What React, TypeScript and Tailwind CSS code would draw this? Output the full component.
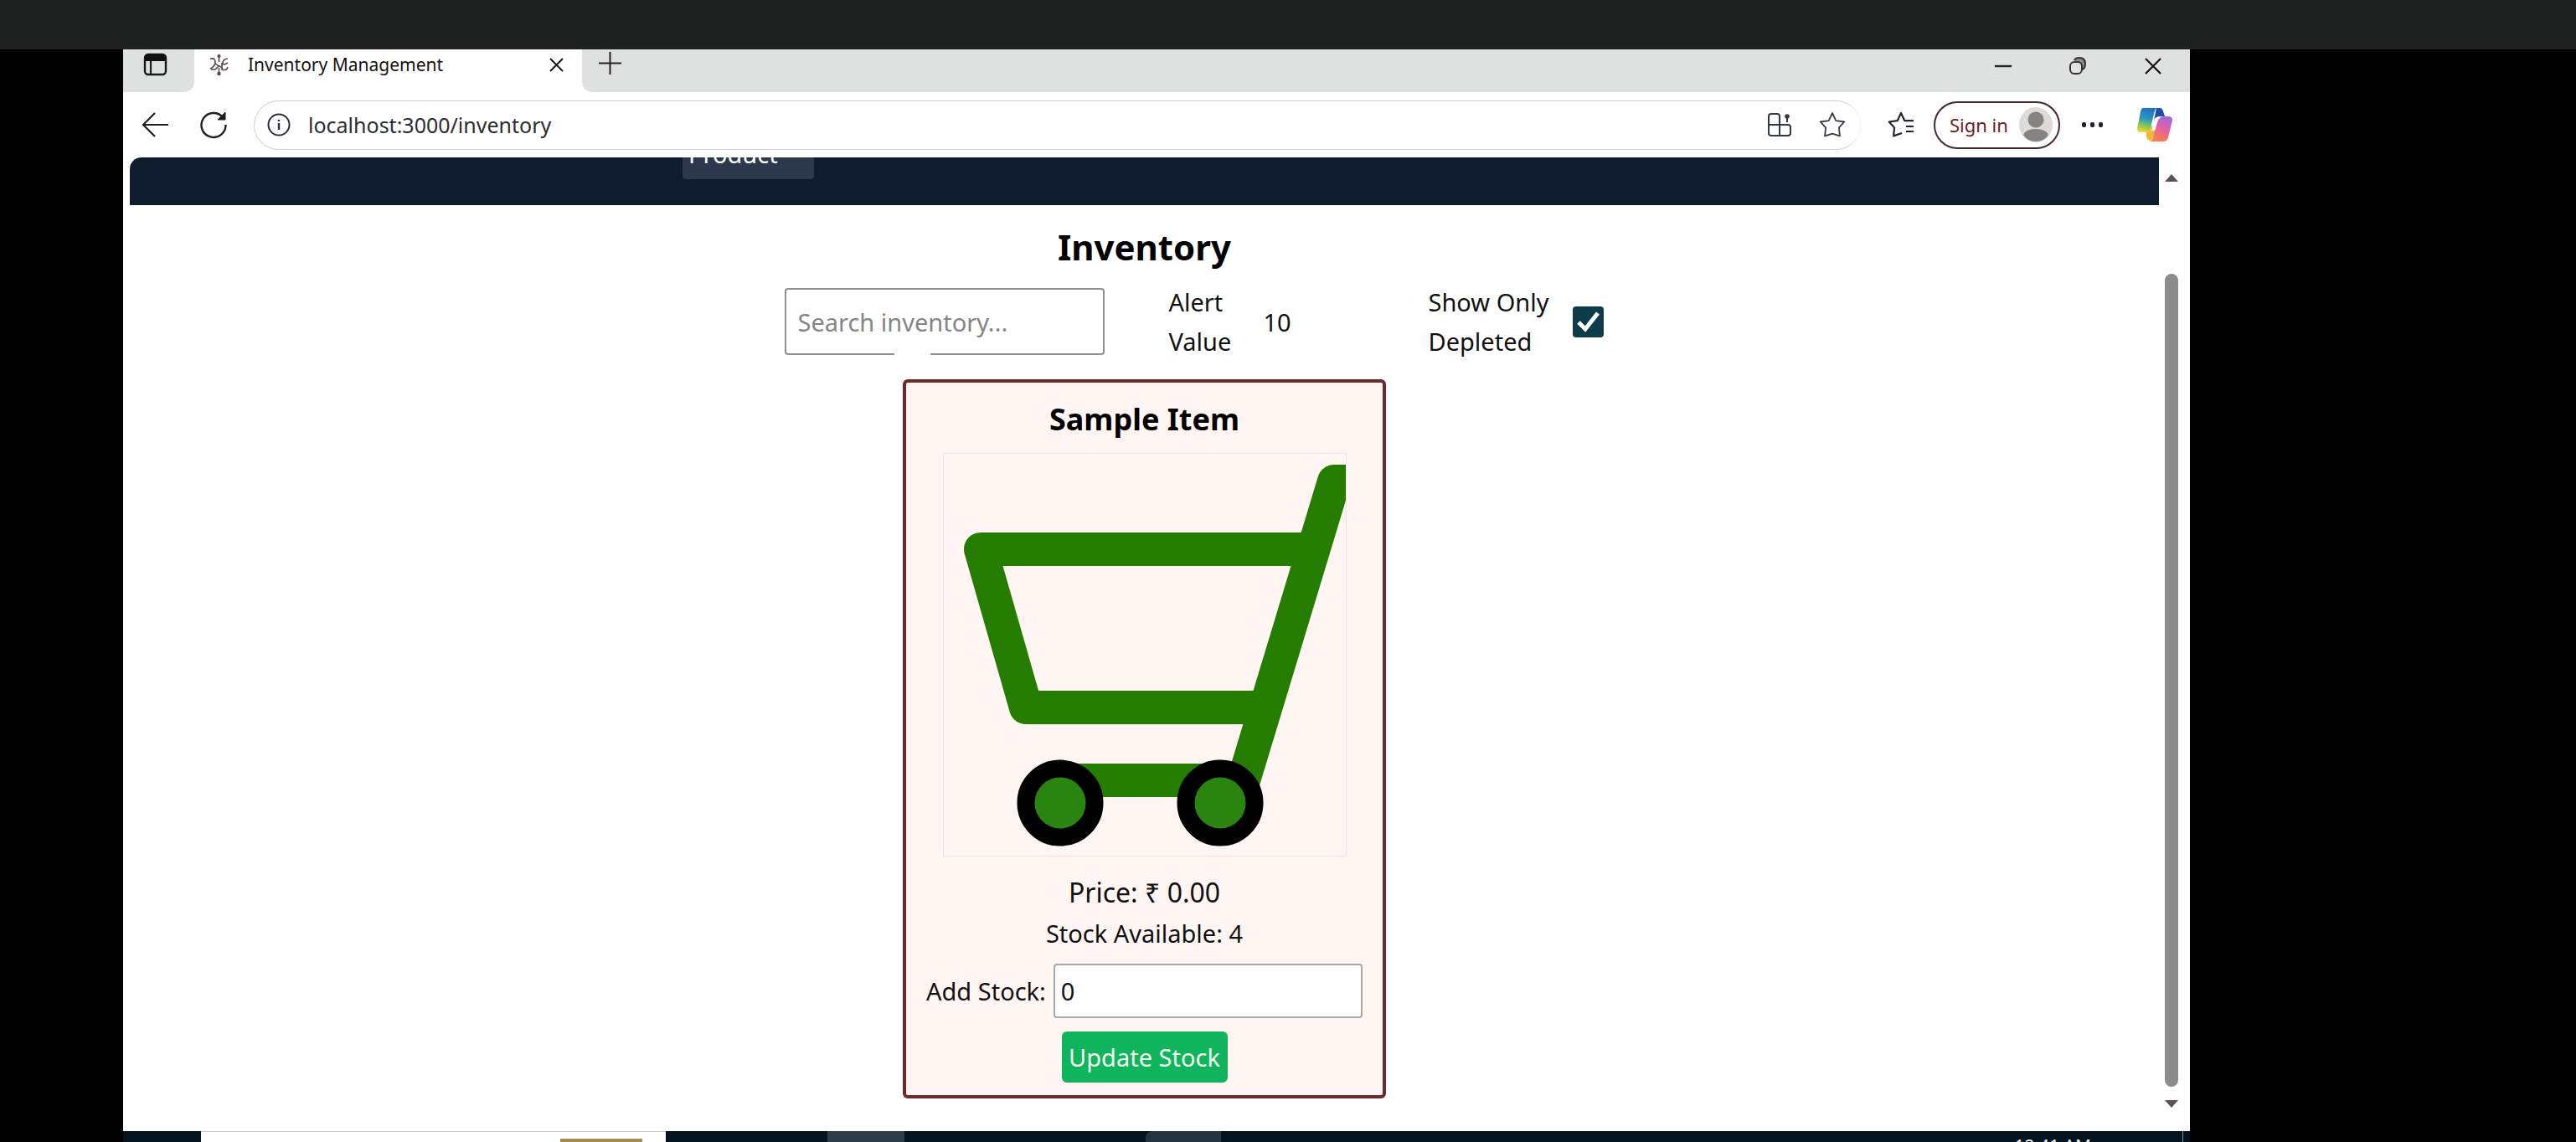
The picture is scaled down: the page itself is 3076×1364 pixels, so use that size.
import React from "react";

function TabStrip() {
  return (
    <div className="flex h-[51px] bg-[#dfe0e0]">
      <div className="flex w-[85px] items-start rounded-br-[14px] pl-6 pt-1">
        <button aria-label="Tab actions">
          <svg width="30" height="28" viewBox="0 0 30 28" fill="none">
            <rect x="2" y="2" width="25" height="24" rx="4" stroke="#1c1c1c" strokeWidth="2.4" />
            <path d="M2 5q0-3 4-3h17q4 0 4 3v5H2z" fill="#111" />
            <path d="M9 10v16" stroke="#1c1c1c" strokeWidth="2.2" />
          </svg>
        </button>
      </div>
      <div className="relative flex w-[463px] items-start bg-white pl-4">
        <svg className="absolute -left-[14px] bottom-0" width="14" height="14" viewBox="0 0 14 14">
          <path d="M14 0v14H0Q14 14 14 0z" fill="#fff" />
        </svg>
        <svg className="absolute -right-[14px] bottom-0" width="14" height="14" viewBox="0 0 14 14">
          <path d="M0 0v14h14Q0 14 0 0z" fill="#fff" />
        </svg>
        <svg className="mt-[5px]" width="28" height="28" viewBox="0 0 28 28" fill="none" stroke="#54474a" strokeWidth="1.6">
          <path d="M13.500 3v7M13.500 17v6M3 6q6-1 6 4t-6 8M8 11l5 4-4 4H4M24 6q-6 1-6 5t6 0M17 11v8q6 2 7-3M13 14l5 4" />
          <circle cx="13.500" cy="3" r="1.200" fill="#54474a" />
          <circle cx="13.500" cy="24" r="1.400" fill="#54474a" />
        </svg>
        <span className="ml-5 flex-1 text-[21px] leading-9 text-[#111]">Inventory Management</span>
        <button aria-label="Close tab" className="mr-5 mt-[9px]">
          <svg width="20" height="20" viewBox="0 0 20 20" stroke="#1a1a1a" strokeWidth="2">
            <path d="M2 2l15 15M17 2L2 17" />
          </svg>
        </button>
      </div>
      <button aria-label="New tab" className="ml-[19px] self-start pt-[2px]">
        <svg width="30" height="30" viewBox="0 0 30 30" stroke="#2a2222" strokeWidth="2">
          <path d="M1 14.500h27M14.500 1v27" />
        </svg>
      </button>
      <div className="flex flex-1 items-start justify-end gap-[66px] pr-8 pt-2">
        <button aria-label="Minimize">
          <svg width="22" height="24" viewBox="0 0 22 24" stroke="#222" strokeWidth="2.4">
            <path d="M1 12h20" />
          </svg>
        </button>
        <button aria-label="Restore">
          <svg width="24" height="24" viewBox="0 0 24 24" fill="none" stroke="#333" strokeWidth="2">
            <path d="M8 5q1-3 6-3 7 0 7 7 0 5-3 7" fill="#8a8a8a" />
            <rect x="3" y="7" width="14" height="14" rx="5" fill="#e4e4e4" />
          </svg>
        </button>
        <button aria-label="Close">
          <svg width="24" height="24" viewBox="0 0 24 24" stroke="#111" strokeWidth="2.2">
            <path d="M3 3l18 18M21 3L3 21" />
          </svg>
        </button>
      </div>
    </div>
  );
}

function Toolbar() {
  return (
    <div className="flex h-[78px] items-center bg-white pr-5">
      <button aria-label="Back" className="ml-5">
        <svg width="36" height="32" viewBox="0 0 36 32" fill="none" stroke="#1f1f1f" strokeWidth="2.2">
          <path d="M34 16H4M18 2L4 16l14 14" />
        </svg>
      </button>
      <button aria-label="Refresh" className="ml-[34px]">
        <svg width="36" height="36" viewBox="0 0 36 36" fill="none" stroke="#1f1f1f" strokeWidth="2.4">
          <path d="M29 9A14.500 14.500 0 1 0 32.500 18" />
          <path d="M32 3v9h-9z" fill="#1f1f1f" strokeWidth="1" />
        </svg>
      </button>
      <div className="ml-[30px] flex h-[59px] flex-1 items-center rounded-full border-t border-b border-l border-[#cfcfcf] pl-[14px]">
        <svg width="30" height="30" viewBox="0 0 30 30" fill="none" stroke="#2b2f3a" strokeWidth="2">
          <circle cx="15" cy="15" r="12.500" />
          <path d="M15 9v2M15 13v8" strokeWidth="2.4" />
        </svg>
        <input
          aria-label="Address"
          className="ml-5 min-w-0 flex-1 text-[25px] leading-9 text-[#2d2d33] outline-none"
          defaultValue="localhost:3000/inventory"
        />
        <button aria-label="Install app">
          <svg width="30" height="30" viewBox="0 0 30 30" fill="none" stroke="#333843" strokeWidth="2">
            <path d="M15 28H5q-3 0-3-3V5q0-3 3-3h7q3 0 3 3v23zM2 15h23q3 0 3 3v7q0 3-3 3H15M24 3v9" />
            <circle cx="24" cy="5" r="2.800" fill="#333843" stroke="none" />
          </svg>
        </button>
        <button aria-label="Add to favorites" className="ml-8 mr-[18px]">
          <svg width="32" height="32" viewBox="0 0 32 32" fill="none" stroke="#3a3a44" strokeWidth="1.800" strokeLinejoin="round">
            <path d="M16 2l4.300 9.200 10 1.300-6.400 6.900 1 10L16 26.600l-8.900 2.800 1-10-6.400-6.900 10-1.300z" />
          </svg>
        </button>
      </div>
      <button aria-label="Favorites" className="ml-8">
        <svg width="34" height="32" viewBox="0 0 34 32" fill="none" stroke="#22242e" strokeWidth="2.200" strokeLinejoin="round">
          <path d="M17 26l-9.900 3.400 1-10-6.400-6.900 10-1.300L16 2l4.300 9.200H31M22 18h9M22 24h9" />
        </svg>
      </button>
      <button className="ml-[21px] flex h-[57px] w-[151px] items-center justify-between rounded-full border-2 border-[#46292b] pl-[17px] pr-[7px]">
        <span className="text-[22px] leading-8 text-[#6a1d22]">Sign in</span>
        <svg width="40" height="42" viewBox="0 0 40 42">
          <ellipse cx="20" cy="21" rx="20" ry="21" fill="#dddad7" />
          <circle cx="20" cy="15" r="9.500" fill="#858382" />
          <path d="M5 33q3-7 15-7t15 7q-5 8-15 8T5 33z" fill="#858382" />
        </svg>
      </button>
      <button aria-label="Settings and more" className="ml-[25px]">
        <svg width="28" height="10" viewBox="0 0 28 10" fill="#202028">
          <rect x="1" y="2" width="5" height="6" rx="2" />
          <rect x="11" y="2" width="5" height="6" rx="2" />
          <rect x="21" y="2" width="5" height="6" rx="2" />
        </svg>
      </button>
      <button aria-label="Copilot" className="ml-[38px]">
        <svg width="44" height="42" viewBox="0 0 44 42">
          <defs>
            <linearGradient id="cool" x1="0.600" y1="0" x2="0.400" y2="1">
              <stop offset="0" stopColor="#1f6fc4" />
              <stop offset="0.450" stopColor="#2a9ac0" />
              <stop offset="0.720" stopColor="#7fc35a" />
              <stop offset="1" stopColor="#f2d432" />
            </linearGradient>
            <linearGradient id="warm" x1="0.700" y1="0" x2="0.300" y2="1">
              <stop offset="0" stopColor="#a566e6" />
              <stop offset="0.500" stopColor="#e8619c" />
              <stop offset="1" stopColor="#f9853f" />
            </linearGradient>
          </defs>
          <path d="M24 1h4q3 0 4 4l2 6h-6q-5 0-7 5z" fill="#1a4fae" />
          <path d="M8 1h16q-2 2-3 7l-4 17q-1 5-5 5H5q-4 0-4-4 0-2 1-5L5 5q1-4 3-4z" fill="url(#cool)" />
          <path d="M12 30q4 0 5-5l1-3 6 2-4 12q-1 3-4 4-3-1-4-5z" fill="#f3b62e" />
          <path d="M32 11h6q5 0 5 4 0 2-1 5l-4 16q-1 5-6 5H16q3-1 4-5l5-18q1-6 7-7z" fill="url(#warm)" />
          <path d="M22 13h6q-2 1-3 5l-3 10h-4z" fill="#fff" />
        </svg>
      </button>
    </div>
  );
}

function CartPicture() {
  return (
    <svg
      role="img"
      aria-label="Shopping cart"
      className="mx-auto aspect-square w-[482px] border border-[#f1e1e5]"
      viewBox="0 0 480 480"
      fill="none"
    >
      <g stroke="#257d00" strokeWidth="40" strokeLinejoin="round">
        <path d="M500 33H466L358 390H140" />
        <path d="M440 114H44L98 303H385" />
      </g>
      <g stroke="#000" strokeWidth="21" fill="#2a8510">
        <circle cx="139" cy="417" r="41" />
        <circle cx="330" cy="417" r="41" />
      </g>
    </svg>
  );
}

function Scrollbar() {
  return (
    <div className="flex w-[37px] flex-col items-center pr-2">
      <svg className="mt-[20px]" width="16" height="9" viewBox="0 0 16 9">
        <path d="M8 0l8 9H0z" fill="#5b5558" />
      </svg>
      <div className="mt-[110px] w-4 flex-1 rounded-full bg-[#8c8c8c]" />
      <svg className="mb-[28px] mt-4" width="16" height="9" viewBox="0 0 16 9">
        <path d="M0 0h16L8 9z" fill="#5b5053" />
      </svg>
    </div>
  );
}

function Inventory() {
  return (
    <main className="flex flex-1 flex-col items-center text-[29px] leading-[47px] text-[#111]">
      <h1 className="mt-5 text-[42px] font-bold leading-[60px] text-black">Inventory</h1>
      <div className="ml-[119px] mt-3 flex w-[979px] items-center">
        <div className="relative">
          <input
            type="search"
            aria-label="Search inventory"
            placeholder="Search inventory..."
            className="block h-[80px] w-[382px] rounded-[4px] border-2 border-[#8f8f8f] px-[14px] placeholder:text-[#858585]"
          />
          <span className="absolute bottom-0 left-[131px] h-[3px] w-[43px] bg-white" />
        </div>
        <label htmlFor="alert" className="ml-[77px] w-[80px]">
          Alert Value
        </label>
        <input id="alert" defaultValue="10" className="ml-[33px] w-[120px] outline-none" />
        <label htmlFor="depleted" className="ml-[77px] w-[160px]">
          Show Only Depleted
        </label>
        <span className="relative ml-3 h-[37px] w-[37px] shrink-0">
          <input
            id="depleted"
            type="checkbox"
            defaultChecked
            className="block h-[37px] w-[37px] appearance-none rounded-[4px] bg-[#0d3d4a]"
          />
          <svg className="pointer-events-none absolute inset-0" viewBox="0 0 37 37" fill="none" stroke="#fff" strokeWidth="5">
            <path d="M7 19l8 8L30 8" />
          </svg>
        </span>
      </div>

      <section className="mt-[22px] flex w-[577px] flex-col rounded-[6px] border-4 border-[#6b2a2b] bg-[#fff5f3] px-6 pb-[15px] text-center">
        <h2 className="mt-4 text-[36px] font-bold leading-[56px] text-black">Sample Item</h2>
        <div className="mt-3 flex">
          <CartPicture />
        </div>
        <p className="mt-[18px] text-[32px] leading-[50px]">Price: ₹ 0.00</p>
        <p className="leading-[48px]">Stock Available: 4</p>
        <div className="mt-3 flex items-center">
          <label htmlFor="add" className="whitespace-nowrap">
            Add Stock:
          </label>
          <input
            id="add"
            defaultValue="0"
            className="ml-[9px] h-[65px] min-w-0 flex-1 rounded-[4px] border-2 border-[#aaa5a8] bg-white px-[7px]"
          />
        </div>
        <button className="mx-auto mt-4 h-[61px] w-[198px] rounded-[6px] bg-[#0fb45c] text-[#f3fff0]">Update Stock</button>
      </section>
    </main>
  );
}

function Taskbar() {
  return (
    <footer className="flex h-[13px] shrink-0 overflow-hidden bg-[#03141c]">
      <div className="ml-[93px] flex w-[555px] items-end justify-end border-t border-[#c8c8cc] bg-white pr-7">
        <div className="h-1 w-[98px] bg-[#a58a50]" />
      </div>
      <div className="ml-[193px] w-[92px] bg-[#2d3c46]" />
      <div className="ml-[288px] w-[90px] rounded-tl-lg bg-[#26343e]" />
      <div className="flex flex-1 justify-end">
        <span className="mr-[109px] mt-[6px] text-[21px] leading-6 text-[#e8f2ee]">12:41 AM</span>
        <div className="mr-2 w-px bg-[#7e8a92]" />
      </div>
    </footer>
  );
}

export default function App() {
  return (
    <div className="flex h-screen flex-col overflow-hidden bg-black font-['Noto_Sans',sans-serif]">
      <div className="h-[59px] shrink-0 bg-[#202121]" />
      <div className="ml-[147px] mr-[461px] flex min-h-0 flex-1 flex-col bg-white">
        <TabStrip />
        <Toolbar />
        <div className="flex min-h-0 flex-1">
          <div className="ml-2 flex flex-1 flex-col">
            <nav className="h-[57px] overflow-hidden rounded-tl-[14px] bg-[#0f1c2e]">
              <a
                href="#product"
                className="ml-[660px] block h-[26px] w-[157px] overflow-hidden rounded-b-[4px] bg-[#2c384b] pl-[7px] text-[29px] leading-[-4px] text-white"
              >
                <span className="-mt-[25px] block leading-[42px]">Product</span>
              </a>
            </nav>
            <Inventory />
          </div>
          <Scrollbar />
        </div>
        <Taskbar />
      </div>
    </div>
  );
}
